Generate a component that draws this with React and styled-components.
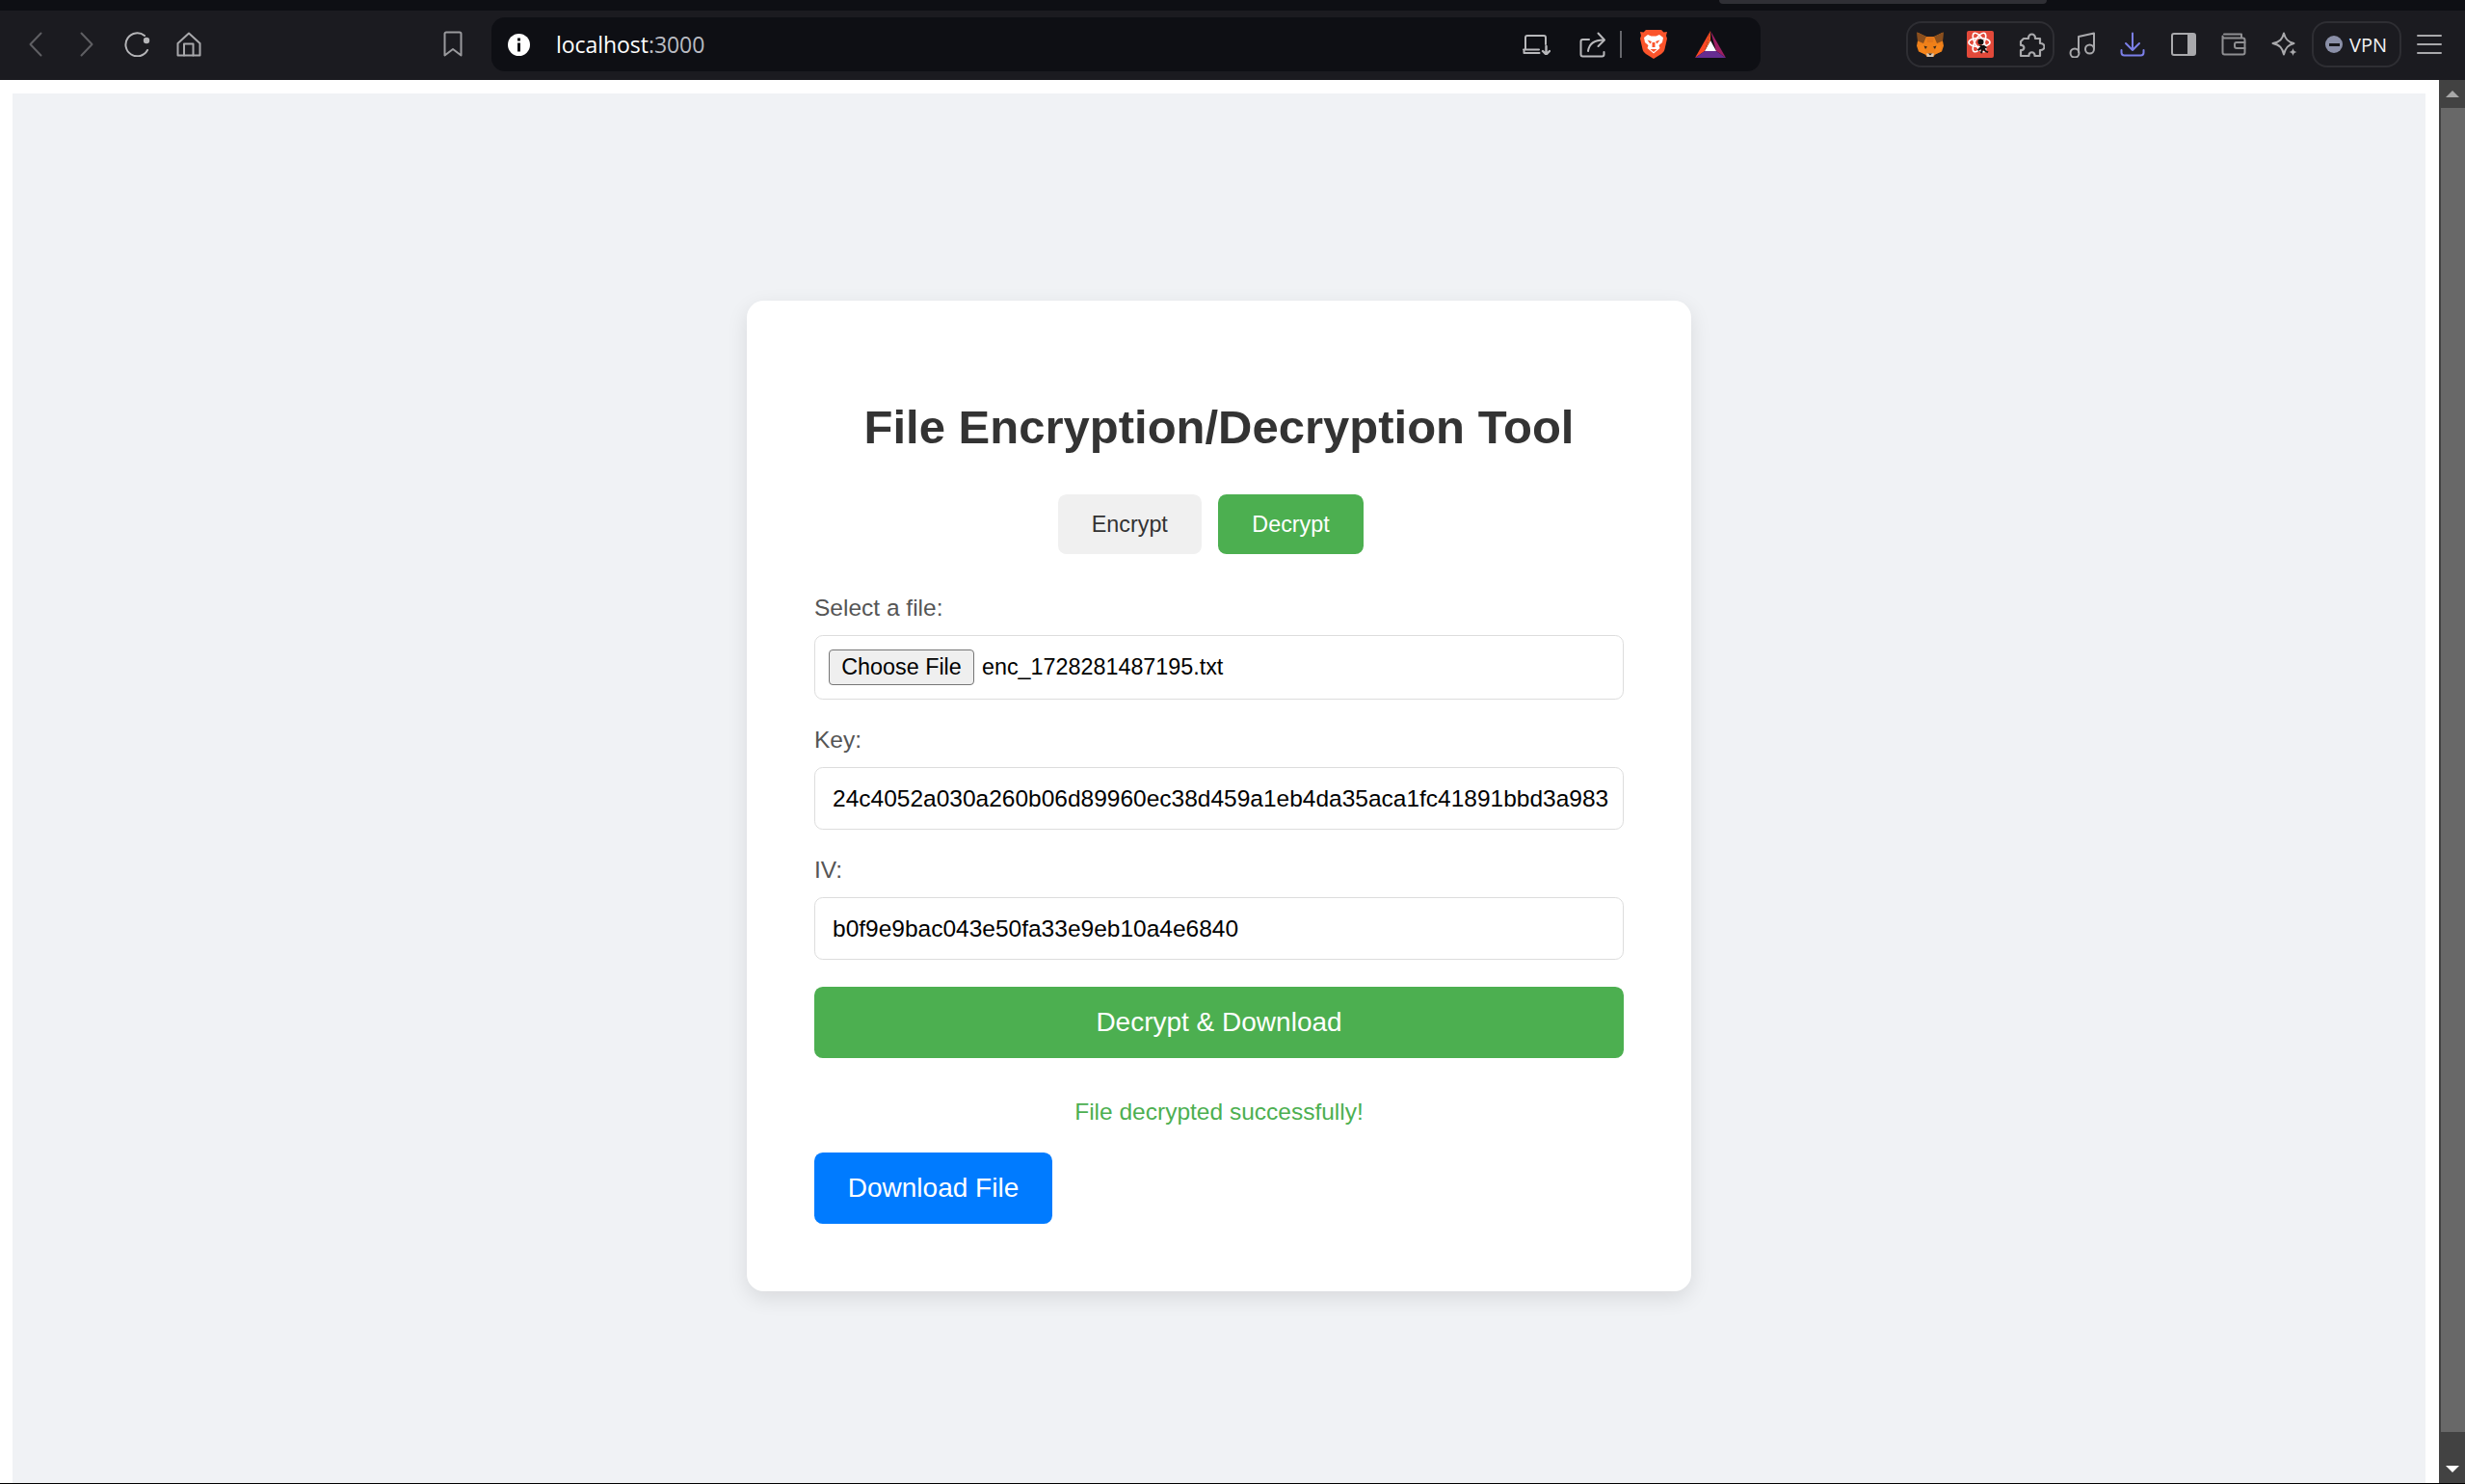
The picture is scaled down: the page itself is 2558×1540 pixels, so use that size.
import React from 'react';
import styled, { createGlobalStyle } from 'styled-components';

const GlobalStyle = createGlobalStyle`
  html, body {
    margin: 0;
    padding: 0;
    height: 100%;
    overflow: hidden;
    background: #ffffff;
    font-family: "Liberation Sans", Arial, sans-serif;
  }
  * { box-sizing: border-box; }
`;

const Shell = styled.div`
  display: flex;
  flex-direction: column;
  height: 100vh;
  overflow: hidden;
  border-bottom: 1px solid #000000;
`;

const TabStrip = styled.div`
  height: 11px;
  flex: none;
  background: #0e0f14;
  padding-left: 1784px;
`;

const TabEdge = styled.div`
  width: 340px;
  height: 4px;
  background: #2f2f35;
  border-radius: 0 0 6px 6px;
`;

const Toolbar = styled.div`
  height: 72px;
  flex: none;
  display: flex;
  align-items: center;
  padding-left: 10px;
  background: #1b1b20;
`;

const NavCell = styled.div`
  width: 53px;
  height: 48px;
  flex: none;
  display: flex;
  align-items: center;
  justify-content: center;
  margin-top: -3px;
  margin-left: ${(p) => p.$offset || 0}px;
`;

const UrlBar = styled.div`
  width: 1317px;
  height: 56px;
  margin-left: 13.5px;
  margin-top: -2px;
  flex: none;
  display: flex;
  align-items: center;
  padding-left: 17px;
  background: #0e0f14;
  border-radius: 14px;
`;

const Address = styled.div`
  margin-left: 27px;
  font-family: "Open Sans", "Noto Sans", sans-serif;
  font-size: 23px;
  letter-spacing: -0.05px;
  color: #ffffff;
  span { color: #b9bbc2; }
`;

const UrlTools = styled.div`
  margin-left: auto;
  display: flex;
  align-items: center;
  padding-right: 23px;
`;

const UrlCell = styled.div`
  width: ${(p) => p.$w}px;
  margin-right: ${(p) => p.$gap || 0}px;
  display: flex;
  align-items: center;
  justify-content: center;
`;

const UrlDivider = styled.div`
  width: 2px;
  height: 28px;
  background: #66676c;
  margin-right: 13px;
`;

const ToolCluster = styled.div`
  margin-left: 151px;
  display: flex;
  align-items: center;
  gap: 4.5px;
  margin-top: -2px;
`;

const ExtensionGroup = styled.div`
  width: 154px;
  height: 48px;
  display: flex;
  align-items: center;
  justify-content: center;
  gap: 4.5px;
  border: 2px solid #2e2e33;
  border-radius: 16px;
`;

const ToolCell = styled.div`
  width: 48px;
  height: 44px;
  flex: none;
  display: flex;
  align-items: center;
  justify-content: center;
`;

const VpnPill = styled.div`
  width: 93px;
  height: 48px;
  flex: none;
  display: flex;
  align-items: center;
  gap: 7px;
  padding-left: 12px;
  border: 2px solid #2e2e33;
  border-radius: 16px;
  font-family: "Open Sans", "Noto Sans", sans-serif;
  font-size: 20px;
  color: #f2f2f4;
`;

const VpnDot = styled.div`
  width: 18px;
  height: 18px;
  flex: none;
  display: flex;
  align-items: center;
  justify-content: center;
  border-radius: 50%;
  background: #8b90a8;
  &::after {
    content: '';
    width: 11px;
    height: 3px;
    background: #17171b;
  }
`;

const Stage = styled.div`
  flex: 1;
  min-height: 0;
  display: flex;
  overflow: hidden;
`;

const Viewport = styled.div`
  flex: 1;
  min-width: 0;
  padding: 14px 14px 0 13px;
  background: #ffffff;
`;

const Page = styled.div`
  height: 1458px;
  display: flex;
  align-items: center;
  justify-content: center;
  background: #f0f2f5;
`;

const Card = styled.div`
  width: 980px;
  padding: 70px;
  background: #ffffff;
  border-radius: 17.5px;
  box-shadow: 0 7px 21px rgba(0, 0, 0, 0.1);
`;

const Title = styled.h1`
  margin: 33px 0 42px;
  text-align: center;
  font-size: 49px;
  line-height: 56px;
  font-weight: 700;
  color: #333333;
`;

const Tabs = styled.div`
  display: flex;
  justify-content: center;
  gap: 17.5px;
  padding-right: 17.5px;
  margin-bottom: 41px;
`;

const Tab = styled.button`
  height: 62px;
  padding: 0 35px;
  border: none;
  border-radius: 8.75px;
  font-family: inherit;
  font-size: 23.33px;
  background: ${(p) => (p.$active ? '#4caf50' : '#f0f0f0')};
  color: ${(p) => (p.$active ? '#ffffff' : '#333333')};
`;

const Field = styled.div`
  margin-bottom: ${(p) => (p.$last ? 0 : 27)}px;
`;

const Label = styled.label`
  display: block;
  margin-bottom: 14px;
  font-size: 24.5px;
  line-height: 29px;
  color: #555555;
`;

const FileBox = styled.div`
  height: 67px;
  display: flex;
  align-items: center;
  padding-left: 14px;
  border: 1px solid #dddddd;
  border-radius: 8.75px;
  font-size: 23.33px;
  color: #000000;
`;

const ChooseButton = styled.button`
  width: 151px;
  height: 37px;
  margin-right: 8px;
  padding: 0;
  background: #efefef;
  border: 1px solid #767676;
  border-radius: 4px;
  font-family: inherit;
  font-size: 23.33px;
  color: #000000;
`;

const TextInput = styled.input`
  display: block;
  width: 100%;
  height: 65px;
  padding: 0 15px 0 18px;
  border: 1px solid #dddddd;
  border-radius: 8.75px;
  font-family: inherit;
  font-size: 24.5px;
  color: #000000;
  background: #ffffff;
  outline: none;
`;

const SubmitButton = styled.button`
  display: block;
  width: 100%;
  height: 74px;
  margin-top: 28px;
  border: none;
  border-radius: 8.75px;
  background: #4caf50;
  color: #ffffff;
  font-family: inherit;
  font-size: 28px;
`;

const Message = styled.p`
  margin: 41px 0 28px;
  text-align: center;
  font-size: 24.5px;
  line-height: 29px;
  color: #4caf50;
`;

const DownloadButton = styled.button`
  display: block;
  width: 247px;
  height: 74px;
  border: none;
  border-radius: 8.75px;
  background: #007bff;
  color: #ffffff;
  font-family: inherit;
  font-size: 28px;
`;

const Scrollbar = styled.div`
  width: 27px;
  flex: none;
  display: flex;
  flex-direction: column;
  align-items: stretch;
  background: #424242;
`;

const ScrollArrow = styled.div`
  height: 29px;
  flex: none;
  display: flex;
  align-items: center;
  justify-content: center;
  &::after {
    content: '';
    width: 0;
    height: 0;
    border-left: 7px solid transparent;
    border-right: 7px solid transparent;
    ${(p) => (p.$down
      ? 'border-top: 7px solid #ffffff;'
      : 'border-bottom: 7px solid #a8a8a8;')}
  }
`;

const ScrollThumb = styled.div`
  height: 1374px;
  flex: none;
  margin-left: 2px;
  background: #686868;
`;

const ScrollGap = styled.div`
  flex: 1;
`;

const Glyph = ({ w, h, color = '#a8a8ab', sw = 2, children }) => (
  <svg width={w} height={h} viewBox={`0 0 ${w} ${h}`} fill="none" stroke={color} strokeWidth={sw} strokeLinecap="round" strokeLinejoin="round">
    {children}
  </svg>
);

const BackIcon = () => <Glyph w={14} h={26} color="#5f5f63"><path d="M12.5 1.5 1.5 13l11 11.5" /></Glyph>;
const ForwardIcon = () => <Glyph w={14} h={26} color="#5f5f63"><path d="M1.5 1.5 12.5 13l-11 11.5" /></Glyph>;

const ReloadIcon = () => (
  <Glyph w={28} h={26} color="#b5b5b8">
    <path d="M21 4A12 12 0 1 0 24 19" />
    <circle cx={23} cy={9} r={3.2} fill="#b5b5b8" stroke="none" />
  </Glyph>
);

const HomeIcon = () => (
  <Glyph w={26} h={26}>
    <path d="M13 1.5 1.5 12v12.5h23V12z" />
    <path d="M8 24.5V12.500h9.500v12" />
  </Glyph>
);

const BookmarkIcon = () => (
  <Glyph w={20} h={27} color="#9a9a9d">
    <path d="M3 1.5h14a1.5 1.5 0 0 1 1.5 1.5v22.5L10 19 1.5 25.5V3A1.5 1.5 0 0 1 3 1.5z" />
  </Glyph>
);

const InfoIcon = () => (
  <svg width="23" height="23" viewBox="0 0 23 23">
    <circle cx="11.5" cy="11.5" r="11.5" fill="#ffffff" />
    <rect x="10" y="4.5" width="3" height="3" fill="#0e0f14" />
    <rect x="10" y="9.5" width="3" height="9" fill="#0e0f14" />
  </svg>
);

const CastIcon = () => (
  <Glyph w={29} h={21} color="#b8b8bb">
    <path d="M3 15V3a2 2 0 0 1 2-2h17a2 2 0 0 1 2 2v7" />
    <path d="M1 15.5h16M1.5 15.5v3.500h16" />
    <path d="M24.5 12v8M21 17l3.5 3.5L28 17" strokeWidth={2.4} />
  </Glyph>
);

const ShareIcon = () => (
  <Glyph w={28} h={27} color="#b8b8bb">
    <path d="M10 8H3.5A2 2 0 0 0 1.5 10v13.5a2 2 0 0 0 2 2h20a2 2 0 0 0 2-2V21" />
    <path d="M9 20C10 13 15 8.5 25 8.5" />
    <path d="M19.5 1.5 26 8.5 19.5 15" />
  </Glyph>
);

const BraveIcon = () => (
  <svg width="28" height="30" viewBox="0 0 28 30">
    <path d="M6 0h16l2.500 2.500L28 2l-1 4 1 3-2.500 11c-.5 2-1.500 3.500-3.500 5L14 30l-8-5c-2-1.500-3-3-3.500-5L0 9l1-3-1-4 3.500.5z" fill="#fb542b" />
    <path d="M8 5l3.500 1.500h5L20 5l4 3-1 5-3.500 3 1 3-3 2.500-3.500 3-3.500-3-3-2.500 1-3L5 13 4 8z" fill="#ffffff" />
    <path d="M7.500 10.500l4.500 1.500-1.500 2.500zM20.500 10.500 16 12l1.500 2.500z" fill="#fb542b" />
    <path d="M12.500 13h3v5h-3zM10.500 20h7L14 23z" fill="#fb542b" />
  </svg>
);

const BatIcon = () => (
  <svg width="32" height="28" viewBox="0 0 32 28">
    <path d="M16 0 0 28l10-7z" fill="#ff4724" />
    <path d="M16 0 32 28l-10-7z" fill="#9e1f63" />
    <path d="M0 28h32l-10-7H10z" fill="#662d91" />
    <path d="M16 10 22 21H10z" fill="#ffffff" />
    <path d="M16 0 10 21l6-11z" fill="#f15a24" />
  </svg>
);

const FoxIcon = () => (
  <svg width="28" height="27" viewBox="0 0 28 27">
    <path d="M.5.500 10 5h8L27.500.500l-.5 9 1 5-2 6-7 3-1.500 2.500h-7L9 23.500 2 20.500l-2-6 1-5z" fill="#ef8019" />
    <path d="M.5.500 10 5 7 12 1 9.500zM27.500.500 18 5l3 7 6-2.500z" fill="#8a4f1e" />
    <path d="M10 5h8l-1 6h-6z" fill="#e2761b" />
    <path d="M3 14l5-1 2 10-1 .5-6-3zM25 14l-5-1-2 10 1 .5 6-3z" fill="#f6851b" />
    <path d="M7.500 14.500l3.500 1-2 2.500zM20.500 14.500l-3.500 1 2 2.500z" fill="#3a2a1c" />
    <path d="M10 22.500h8l-1 3.500h-6z" fill="#d9c9b8" />
    <path d="M12 22.500h4L14 24.500z" fill="#1c1c1c" />
  </svg>
);

const ReactBugIcon = () => (
  <svg width="28" height="28" viewBox="0 0 28 28">
    <rect width="28" height="28" rx="2" fill="#e2493a" />
    <g fill="none" stroke="#ffffff" strokeWidth="1.600">
      <ellipse cx="13" cy="12" rx="11" ry="4.500" />
      <ellipse cx="13" cy="12" rx="11" ry="4.500" transform="rotate(60 13 12)" />
      <ellipse cx="13" cy="12" rx="11" ry="4.500" transform="rotate(120 13 12)" />
    </g>
    <circle cx="14.500" cy="11.500" r="3" fill="#111111" />
    <path d="M13 15h5l3 2-1 1.500-1.500-1 1.500 3 2.500 1-1 1.500-3-1.500-1.500-2-1 4-2-.5 1-4-3 2-1-1.500 3-3z" fill="#111111" />
  </svg>
);

const PuzzleIcon = () => (
  <Glyph w={28} h={27} color="#a9a9ac" sw={2.2}>
    <path d="M6 7H11C10.500 1 18.500 1 18 7H23V12C29 11.500 29 19.500 23 19V25H17.500C18 20 11 20 11.500 25H3V19C7.500 19.500 7.500 13.500 3 14V10Z" />
  </Glyph>
);

const MusicIcon = () => (
  <Glyph w={28} h={27} color="#a9a9ac" sw={2}>
    <path d="M10 21V5L26 1.500V17" />
    <circle cx="6" cy="22" r="4.500" />
    <circle cx="21.500" cy="18" r="4.500" />
  </Glyph>
);

const DownloadIcon = () => (
  <Glyph w={26} h={26} color="#7b7fe8" sw={2}>
    <path d="M13 1.500v17M6 12l7 7 7-7" />
    <path d="M1.500 19v2.500a3 3 0 0 0 3 3h17a3 3 0 0 0 3-3V19" />
  </Glyph>
);

const SidebarIcon = () => (
  <svg width="26" height="24" viewBox="0 0 26 24">
    <rect x="1" y="1" width="24" height="22" rx="2" fill="none" stroke="#a9a9ac" strokeWidth="2" />
    <rect x="17" y="1" width="8" height="22" fill="#a9a9ac" />
  </svg>
);

const WalletIcon = () => (
  <Glyph w={26} h={24} color="#8f8f92">
    <path d="M3 1.500h18v4M1.500 3.500v17a2 2 0 0 0 2 2h19a2 2 0 0 0 2-2v-13a2 2 0 0 0-2-2H3A2 2 0 0 1 1.500 3.500z" />
    <path d="M24.500 10H16a2 2 0 0 0-2 2v2a2 2 0 0 0 2 2h8.500" />
  </Glyph>
);

const SparkleIcon = () => (
  <svg width="28" height="27" viewBox="0 0 28 27">
    <path d="M13 1.500c1.500 6 4 9 10.500 10.500-6.500 1.500-9 5-10.500 11.500C11.500 17 9 13.500 1.500 12 9 10.500 11.500 7.500 13 1.500z" fill="none" stroke="#a9a9ac" strokeWidth="2" strokeLinejoin="round" />
    <path d="M22.500 17c.5 2.500 1.500 3.500 4 4-2.500.5-3.500 1.500-4 4-.5-2.500-1.500-3.500-4-4 2.500-.5 3.500-1.500 4-4z" fill="#a9a9ac" />
  </svg>
);

const MenuIcon = () => (
  <Glyph w={26} h={22} color="#a9a9ac" sw={2}>
    <path d="M1 2h24M1 11h24M1 20h24" />
  </Glyph>
);

const App = () => {
  const navIcons = [<BackIcon key="b" />, <ForwardIcon key="f" />, <ReloadIcon key="r" />, <HomeIcon key="h" />];
  const extensions = [<FoxIcon key="fox" />, <ReactBugIcon key="react" />, <PuzzleIcon key="puzzle" />];
  const tools = [<MusicIcon key="m" />, <DownloadIcon key="d" />, <SidebarIcon key="s" />, <WalletIcon key="w" />, <SparkleIcon key="l" />];

  return (
    <Shell>
      <GlobalStyle />
      <TabStrip><TabEdge /></TabStrip>
      <Toolbar>
        {navIcons.map((icon) => <NavCell key={icon.key}>{icon}</NavCell>)}
        <NavCell $offset={221.5}><BookmarkIcon /></NavCell>
        <UrlBar>
          <InfoIcon />
          <Address>localhost<span>:3000</span></Address>
          <UrlTools>
            <UrlCell $w={58} $gap={9.5}><CastIcon /></UrlCell>
            <UrlCell $w={40} $gap={8.5}><ShareIcon /></UrlCell>
            <UrlDivider />
            <UrlCell $w={40} $gap={10}><BraveIcon /></UrlCell>
            <UrlCell $w={58}><BatIcon /></UrlCell>
          </UrlTools>
        </UrlBar>
        <ToolCluster>
          <ExtensionGroup>
            {extensions.map((icon) => <ToolCell key={icon.key}>{icon}</ToolCell>)}
          </ExtensionGroup>
          {tools.map((icon) => <ToolCell key={icon.key}>{icon}</ToolCell>)}
          <VpnPill><VpnDot />VPN</VpnPill>
          <ToolCell><MenuIcon /></ToolCell>
        </ToolCluster>
      </Toolbar>
      <Stage>
        <Viewport>
          <Page>
            <Card>
              <Title>File Encryption/Decryption Tool</Title>
              <Tabs>
                <Tab>Encrypt</Tab>
                <Tab $active>Decrypt</Tab>
              </Tabs>
              <Field>
                <Label>Select a file:</Label>
                <FileBox>
                  <ChooseButton>Choose File</ChooseButton>
                  enc_1728281487195.txt
                </FileBox>
              </Field>
              <Field>
                <Label>Key:</Label>
                <TextInput readOnly value="24c4052a030a260b06d89960ec38d459a1eb4da35aca1fc41891bbd3a983" />
              </Field>
              <Field $last>
                <Label>IV:</Label>
                <TextInput readOnly value="b0f9e9bac043e50fa33e9eb10a4e6840" />
              </Field>
              <SubmitButton>Decrypt &amp; Download</SubmitButton>
              <Message>File decrypted successfully!</Message>
              <DownloadButton>Download File</DownloadButton>
            </Card>
          </Page>
        </Viewport>
        <Scrollbar>
          <ScrollArrow />
          <ScrollThumb />
          <ScrollGap />
          <ScrollArrow $down />
        </Scrollbar>
      </Stage>
    </Shell>
  );
};

export default App;
